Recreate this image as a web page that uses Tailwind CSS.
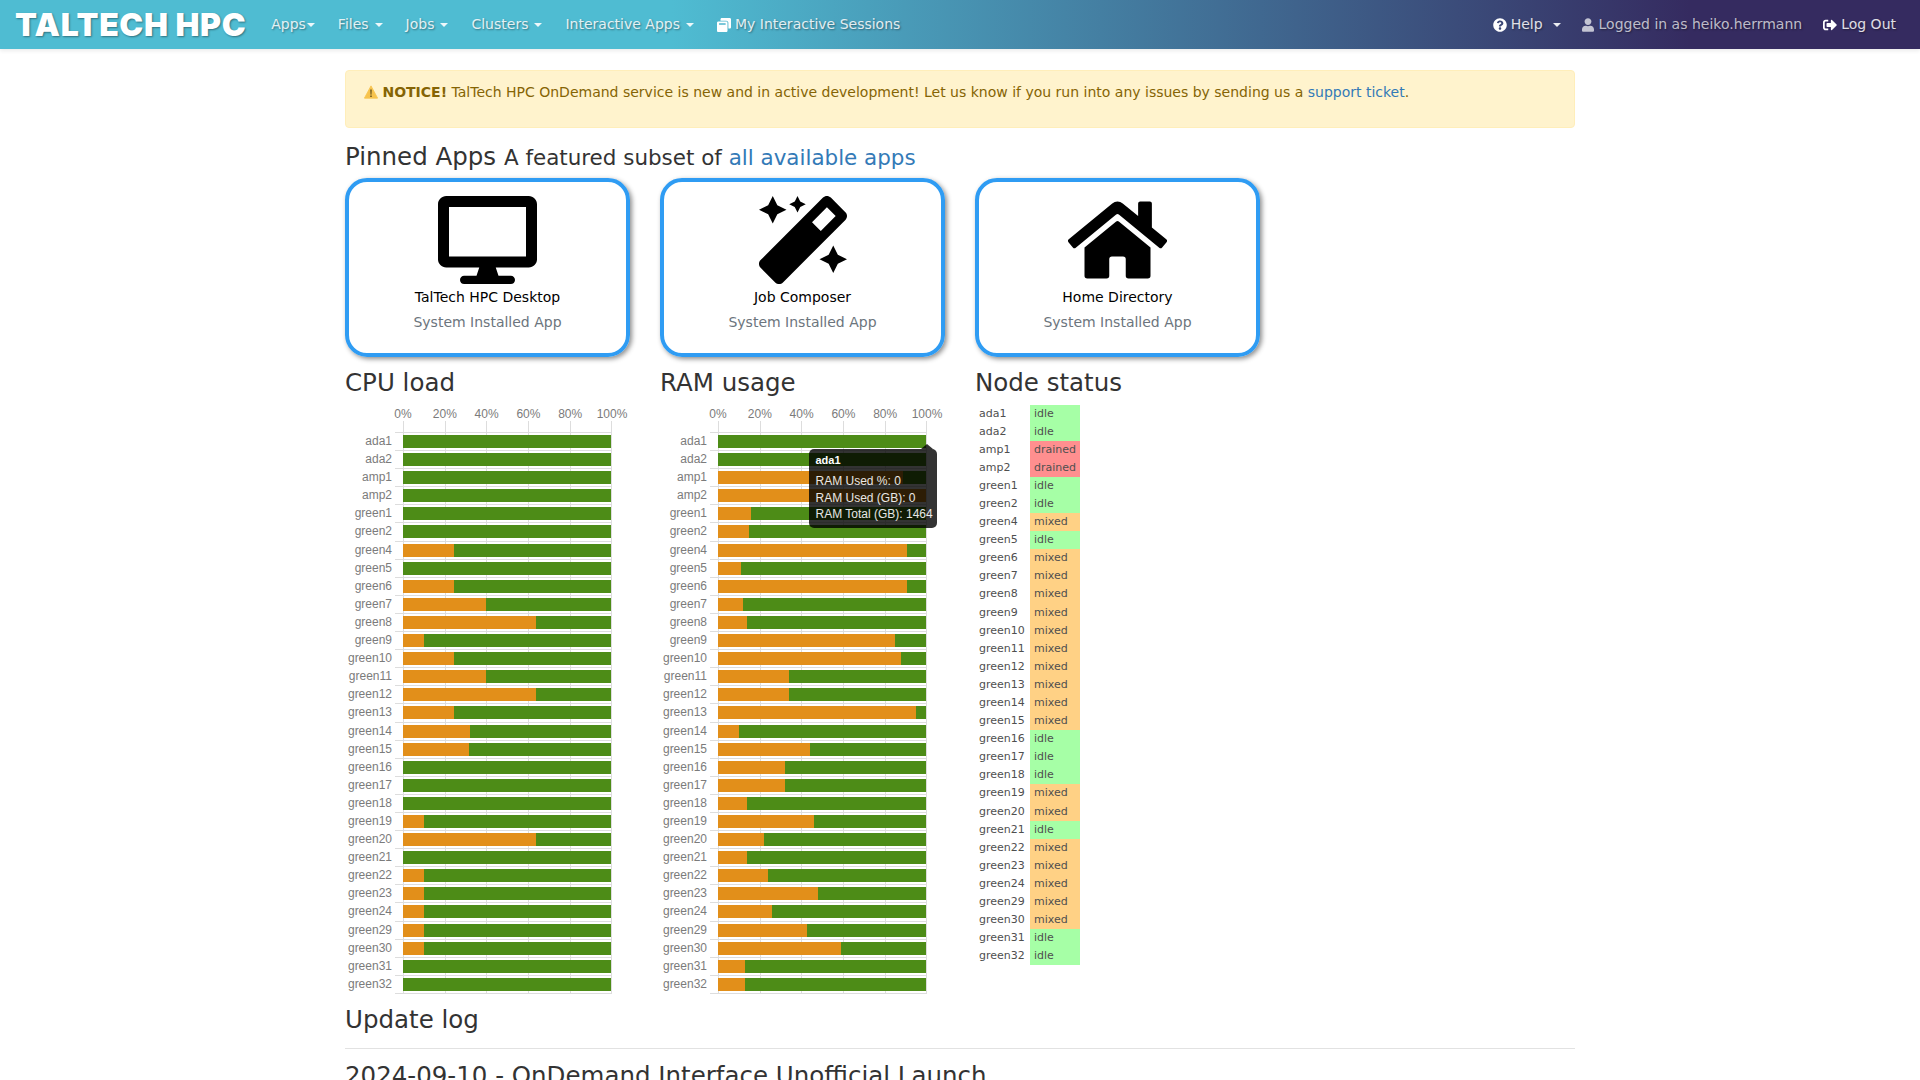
<!DOCTYPE html>
<html lang="en">
<head>
<meta charset="utf-8">
<title>TalTech HPC</title>
<script src="https://cdn.jsdelivr.net/npm/@tailwindcss/browser@4"></script>
</head>
<body class="h-screen overflow-hidden bg-white font-['DejaVu_Sans',sans-serif] text-[14px] text-[#333]">
<nav class="flex h-[49px] items-center justify-between bg-[linear-gradient(90deg,#4fbcd2_0%,#4fbcd2_35%,#352b60_88%,#352b60_100%)] pl-[15px] pr-[24px] text-[14px] text-white/85 shadow-[0_2px_4px_rgba(0,0,0,.08)] [text-shadow:1px_1px_2px_rgba(0,0,0,.4)]">
  <div class="flex items-center">
    <span class="mr-[25px] font-['Inter',sans-serif] text-[32px] font-black leading-none tracking-[0.6px] text-white">TALTECH HPC</span>
    <a class="mr-[23px] flex items-center">Apps<i class="ml-[1px] h-0 w-0 border-x-[4px] border-t-[4px] border-x-transparent border-t-white/90"></i></a>
    <a class="mr-[23px] flex items-center">Files<i class="ml-[6px] h-0 w-0 border-x-[4px] border-t-[4px] border-x-transparent border-t-white/90"></i></a>
    <a class="mr-[23px] flex items-center">Jobs<i class="ml-[6px] h-0 w-0 border-x-[4px] border-t-[4px] border-x-transparent border-t-white/90"></i></a>
    <a class="mr-[23px] flex items-center">Clusters<i class="ml-[6px] h-0 w-0 border-x-[4px] border-t-[4px] border-x-transparent border-t-white/90"></i></a>
    <a class="mr-[23px] flex items-center">Interactive Apps<i class="ml-[6px] h-0 w-0 border-x-[4px] border-t-[4px] border-x-transparent border-t-white/90"></i></a>
    <a class="flex items-center gap-[4px]"><svg class="h-[14px] w-[14px] fill-white" viewBox="0 0 512 512"><path d="M512 48v288c0 26.5-21.5 48-48 48h-48V176c0-44.1-35.9-80-80-80H128V48c0-26.5 21.5-48 48-48h288c26.5 0 48 21.5 48 48zM384 176v288c0 26.5-21.5 48-48 48H48c-26.5 0-48-21.5-48-48V176c0-26.5 21.5-48 48-48h288c26.5 0 48 21.5 48 48zm-68 28c0-6.6-5.4-12-12-12H76v52h240v-40z"/></svg>My Interactive Sessions</a>
  </div>
  <div class="flex items-center">
    <a class="mr-[21px] flex items-center gap-[4px]"><svg class="h-[14px] w-[14px] fill-white" viewBox="0 0 512 512"><path d="M504 256c0 136.997-111.043 248-248 248S8 392.997 8 256C8 119.083 119.043 8 256 8s248 111.083 248 248zM262.655 90c-54.497 0-89.255 22.957-116.549 63.758-3.536 5.286-2.353 12.415 2.715 16.258l34.699 26.31c5.205 3.947 12.621 3.008 16.665-2.122 17.864-22.658 30.113-35.797 57.303-35.797 20.429 0 45.698 13.148 45.698 32.958 0 14.976-12.363 22.667-32.534 33.976C247.128 238.528 216 254.941 216 296v4c0 6.627 5.373 12 12 12h56c6.627 0 12-5.373 12-12v-1.333c0-28.462 83.186-29.647 83.186-106.667 0-58.002-60.165-102-116.531-102zM256 338c-25.365 0-46 20.635-46 46 0 25.364 20.635 46 46 46s46-20.636 46-46c0-25.365-20.635-46-46-46z"/></svg>Help<i class="ml-[6px] h-0 w-0 border-x-[4px] border-t-[4px] border-x-transparent border-t-white/90"></i></a>
    <span class="mr-[21px] flex items-center gap-[5px] text-white/70"><svg class="h-[14px] w-[12px] fill-white/70" viewBox="0 0 448 512"><path d="M224 256c70.7 0 128-57.3 128-128S294.7 0 224 0 96 57.3 96 128s57.3 128 128 128zm89.6 32h-16.7c-22.2 10.2-46.9 16-72.9 16s-50.6-5.8-72.9-16h-16.7C60.2 288 0 348.2 0 422.4V464c0 26.5 21.5 48 48 48h352c26.5 0 48-21.5 48-48v-41.6c0-74.2-60.2-134.4-134.4-134.4z"/></svg>Logged in as heiko.herrmann</span>
    <a class="flex items-center gap-[4px]"><svg class="h-[14px] w-[14px] fill-white" viewBox="0 0 512 512"><path d="M497 273L329 441c-15 15-41 4.5-41-17v-96H152c-13.3 0-24-10.7-24-24v-96c0-13.3 10.7-24 24-24h136V88c0-21.4 25.9-32 41-17l168 168c9.3 9.4 9.3 24.6 0 34zM192 436v-40c0-6.6-5.4-12-12-12H96c-17.7 0-32-14.3-32-32V160c0-17.7 14.3-32 32-32h84c6.6 0 12-5.4 12-12V76c0-6.6-5.4-12-12-12H96c-53 0-96 43-96 96v192c0 53 43 96 96 96h84c6.6 0 12-5.4 12-12z"/></svg>Log Out</a>
  </div>
</nav>

<main class="mx-auto w-[1230px]">
  <div class="mt-[21px] h-[58px] rounded-[4px] border border-[#ffeeba] bg-[#fff3cd] px-[18px] py-[11px] leading-[21px] text-[#856404]">
    <svg class="mb-[2px] inline-block h-[14px] w-[14px] align-middle" viewBox="0 0 16 16"><path d="M8 1 15.5 15H.5z" fill="#f7c34d" stroke="#f7c34d" stroke-linejoin="round"/><path d="M7.2 5h1.6l-.3 6h-1zM7.2 12h1.6v1.6H7.2z" fill="#5b4a1a"/></svg>
    <strong class="font-bold">NOTICE!</strong> TalTech HPC OnDemand service is new and in active development! Let us know if you run into any issues by sending us a <a class="text-[#337ab7]">support ticket</a>.
  </div>

  <h3 class="mt-[15px] h-[29px] text-[24.5px] leading-[28px]">Pinned Apps <small class="text-[21.44px]">A featured subset of <a class="text-[#337ab7]">all available apps</a></small></h3>

  <div class="mt-[6px] grid grid-cols-4 gap-x-[30px]">
    <a class="flex h-[179px] flex-col items-center rounded-[22px] border-[4px] border-[#2f9cf3] pt-[14px] shadow-[2px_2px_5px_rgba(0,0,0,.45)]">
      <svg class="h-[88px] w-[99px]" viewBox="0 0 576 512"><path d="M528 0H48C21.5 0 0 21.5 0 48v320c0 26.5 21.5 48 48 48h192l-16 48h-72c-13.3 0-24 10.7-24 24s10.7 24 24 24h272c13.3 0 24-10.7 24-24s-10.7-24-24-24h-72l-16-48h192c26.5 0 48-21.5 48-48V48c0-26.5-21.5-48-48-48zm-16 352H64V64h448v288z"/></svg>
      <span class="mt-[3px] leading-[21px] text-black">TalTech HPC Desktop</span>
      <span class="mt-[4px] leading-[21px] text-[#6c757d]">System Installed App</span>
    </a>
    <a class="flex h-[179px] flex-col items-center rounded-[22px] border-[4px] border-[#2f9cf3] pt-[14px] shadow-[2px_2px_5px_rgba(0,0,0,.45)]">
      <svg class="h-[88px] w-[88px]" viewBox="0 0 512 512"><path d="M224 96l16-32 32-16-32-16-16-32-16 32-32 16 32 16 16 32zM80 160l26.66-53.33L160 80l-53.34-26.67L80 0 53.34 53.33 0 80l53.34 26.67L80 160zm352 128l-26.66 53.33L352 368l53.34 26.67L432 448l26.66-53.33L512 368l-53.34-26.67L432 288zm70.62-193.77L417.77 9.38C411.53 3.12 403.34 0 395.15 0c-8.19 0-16.38 3.12-22.63 9.38L9.38 372.52c-12.5 12.5-12.5 32.76 0 45.25l84.85 84.85c6.25 6.25 14.44 9.38 22.62 9.38 8.19 0 16.38-3.12 22.63-9.38l363.14-363.15c12.5-12.49 12.5-32.75 0-45.24zM359.45 203.46l-50.91-50.91 86.6-86.6 50.91 50.91-86.6 86.6z"/></svg>
      <span class="mt-[3px] leading-[21px] text-black">Job Composer</span>
      <span class="mt-[4px] leading-[21px] text-[#6c757d]">System Installed App</span>
    </a>
    <a class="flex h-[179px] flex-col items-center rounded-[22px] border-[4px] border-[#2f9cf3] pt-[14px] shadow-[2px_2px_5px_rgba(0,0,0,.45)]">
      <svg class="h-[88px] w-[99px]" viewBox="0 0 576 512"><path d="M280.37 148.26L96 300.11V464a16 16 0 0 0 16 16l112.06-.29a16 16 0 0 0 15.92-16V368a16 16 0 0 1 16-16h64a16 16 0 0 1 16 16v95.64a16 16 0 0 0 16 16.05L464 480a16 16 0 0 0 16-16V300L295.67 148.26a12.19 12.19 0 0 0-15.3 0zM571.6 251.47L488 182.56V44.05a12 12 0 0 0-12-12h-56a12 12 0 0 0-12 12v72.61L318.47 43a48 48 0 0 0-61 0L4.34 251.47a12 12 0 0 0-1.6 16.9l25.5 31A12 12 0 0 0 45.15 301l235.22-193.74a12.19 12.19 0 0 1 15.3 0L530.9 301a12 12 0 0 0 16.9-1.6l25.5-31a12 12 0 0 0-1.7-16.93z"/></svg>
      <span class="mt-[3px] leading-[21px] text-black">Home Directory</span>
      <span class="mt-[4px] leading-[21px] text-[#6c757d]">System Installed App</span>
    </a>
  </div>

  <div class="mt-[11px] grid grid-cols-4 gap-x-[30px]">
    <section>
      <h3 class="h-[29px] text-[24.5px] leading-[29px]">CPU load</h3>
      <div id="cpu" class="mt-[11px]"></div>
    </section>
    <section class="relative">
      <h3 class="h-[29px] text-[24.5px] leading-[29px]">RAM usage</h3>
      <div id="ram" class="mt-[11px]"></div>
      <div class="absolute left-[148.5px] top-[80.5px] h-[79.5px] w-[128.5px] rounded-[5px] bg-black/80 pl-[7px] pt-[4.5px] font-['Liberation_Sans',sans-serif] text-[12px] text-white/90">
        <i class="absolute right-[4px] top-[-5px] h-0 w-0 border-x-[6px] border-b-[5px] border-x-transparent border-b-black/80"></i>
        <div class="text-[11px] font-bold leading-[14px] text-white">ada1</div>
        <div class="mt-[6px] leading-[16.5px]">RAM Used %: 0</div>
        <div class="leading-[16.5px]">RAM Used (GB): 0</div>
        <div class="leading-[16.5px]">RAM Total (GB): 1464</div>
      </div>
    </section>
    <section>
      <h3 class="h-[29px] text-[24.5px] leading-[29px]">Node status</h3>
      <div id="nodes" class="ml-[4px] mt-[7.5px]"></div>
    </section>
  </div>

  <h3 class="mt-[11px] h-[29px] text-[24.5px] leading-[29px]">Update log</h3>
  <hr class="mt-[14px] border-[#e2e2e2]">
  <h3 class="mt-[12px] text-[24.5px] leading-[29px]">2024-09-10 - OnDemand Interface Unofficial Launch</h3>
</main>

<script>
const names = ['ada1','ada2','amp1','amp2','green1','green2','green4','green5','green6','green7','green8','green9','green10','green11','green12','green13','green14','green15','green16','green17','green18','green19','green20','green21','green22','green23','green24','green29','green30','green31','green32'];
const cpu = [0,0,0,0,0,0,24.5,0,24.5,40,64,10,24.5,40,64,24.5,32,31.5,0,0,0,10,64,0,10,10,10,10,10,0,0];
const ram = [0,0,89,100,16,15,91,11,91,12,14,85,88,34,34,95,10,44,32,32,14,46,22,14,24,48,26,43,59,13,13];
const state = ['idle','idle','drained','drained','idle','idle','mixed','idle','mixed','mixed','mixed','mixed','mixed','mixed','mixed','mixed','mixed','mixed','idle','idle','idle','mixed','mixed','idle','mixed','mixed','mixed','mixed','mixed','idle','idle'];
const grid = 'bg-[repeating-linear-gradient(90deg,#ddd_0,#ddd_1px,transparent_1px,transparent_41.7px)]';
function chart(id, values) {
  const ticks = ['0%','20%','40%','60%','80%','100%'].map(t => '<span class="flex w-0 justify-center">' + t + '</span>').join('');
  let html = '<div class="font-[\'Liberation_Sans\',sans-serif] text-[12px] text-[#7b7b7b]">' +
    '<div class="ml-[58px] flex h-[13px] w-[209px] justify-between text-[12px] leading-[13px]">' + ticks + '</div>' +
    '<div class="ml-[58px] h-[11px] w-[209px] ' + grid + '"></div>';
  names.forEach((n, i) => {
    html += '<div class="flex h-[18.1px]">' +
      '<div class="w-[47px] whitespace-nowrap text-right text-[12px] leading-[18px]">' + n + '</div>' +
      '<div class="ml-[3px] w-[8px] border-t border-[#ddd]"></div>' +
      '<div class="w-[209px] border-t border-[#ddd] pt-[2px] ' + grid + '">' +
      '<div class="flex h-[13px] w-[208px] bg-[#4d8c17]"><div class="bg-[#e28f1a]" style="width:' + values[i] + '%"></div></div>' +
      '</div></div>';
  });
  html += '<div class="ml-[50px] h-0 w-[217px] border-t border-[#ddd]"></div></div>';
  document.getElementById(id).innerHTML = html;
}
chart('cpu', cpu);
chart('ram', ram);
const colour = { idle: 'bg-[#a6ffa6]', drained: 'bg-[#ff8f8f]', mixed: 'bg-[#ffd185]' };
document.getElementById('nodes').innerHTML = names.map((n, i) =>
  '<div class="flex h-[18.1px] text-[11px] leading-[18px] text-[#4f4f4f]"><div class="w-[51px]">' + n + '</div><div class="w-[50px] pl-[4px] ' + colour[state[i]] + '">' + state[i] + '</div></div>'
).join('');
</script>
</body>
</html>
